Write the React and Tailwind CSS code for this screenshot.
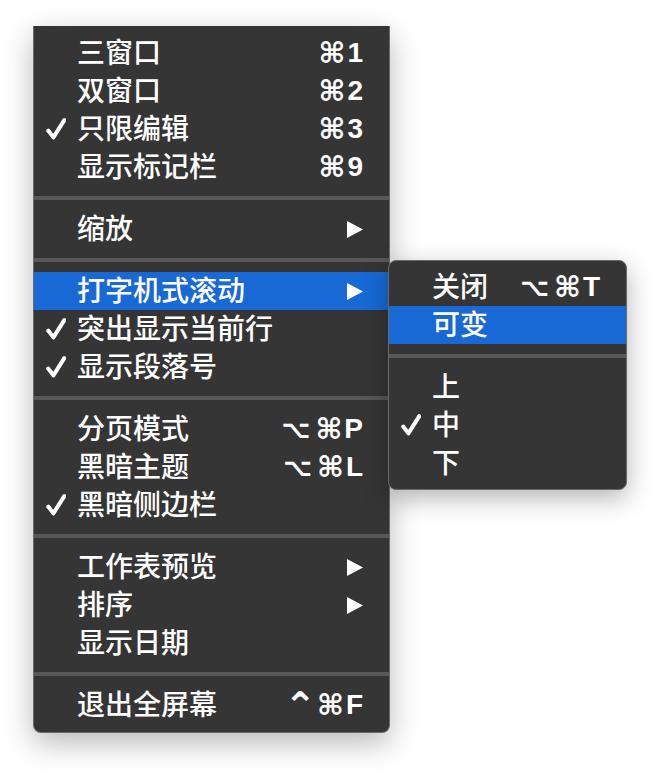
import React from "react";

const CJK = { fontFamily: '"Noto Sans CJK SC", sans-serif' };
const SYM = { fontFamily: '"DejaVu Sans", sans-serif' };
const KEY = { fontFamily: '"Liberation Sans", Arial, sans-serif' };

function Check() {
  return (
    <svg width="20" height="22" viewBox="0 0 20 22" className="block">
      <path d="M2.2 12.5 L7.4 19.3 L18.3 2.2" fill="none" stroke="white" strokeWidth="4" strokeLinecap="round" strokeLinejoin="round" />
    </svg>
  );
}

function Arrow() {
  return (
    <svg width="16" height="17" viewBox="0 0 16 17" className="block">
      <polygon points="0,0 16,8.5 0,17" fill="white" />
    </svg>
  );
}

function Mod({ m }) {
  if (m === "⌘") {
    return <span className="text-[29px] font-bold leading-none" style={SYM}>⌘</span>;
  }
  if (m === "⌥") {
    return <span className="mr-[5px] text-[25px] font-bold leading-none" style={SYM}>⌥</span>;
  }
  return <span className="mr-[1px] pt-[2px] text-[38px] font-bold leading-none" style={SYM}>⌃</span>;
}

function Shortcut({ mods, k }) {
  return (
    <div className="flex items-center text-white">
      {mods.map((m, i) => (
        <Mod key={i} m={m} />
      ))}
      <span className="ml-[2px] text-[28px] font-bold leading-none" style={KEY}>{k}</span>
    </div>
  );
}

function Row({ item }) {
  if (item === "sep") {
    return (
      <div className="flex h-[24px] items-center">
        <div className="h-[4px] w-full bg-[#585858]" />
      </div>
    );
  }
  return (
    <div className={`flex h-[38px] items-center pr-[26px] text-white ${item.hi ? "bg-[#1869d6]" : ""}`}>
      <div className="flex w-[43px] shrink-0 pl-[12px]">{item.check ? <Check /> : null}</div>
      <div className="pb-[4px] text-[28px] font-medium leading-[34px]" style={CJK}>{item.label}</div>
      <div className="ml-auto flex items-center">
        {item.arrow ? <Arrow /> : null}
        {item.k ? <Shortcut mods={item.mods} k={item.k} /> : null}
      </div>
    </div>
  );
}

const mainItems = [
  { label: "三窗口", mods: ["⌘"], k: "1" },
  { label: "双窗口", mods: ["⌘"], k: "2" },
  { label: "只限编辑", mods: ["⌘"], k: "3", check: true },
  { label: "显示标记栏", mods: ["⌘"], k: "9" },
  "sep",
  { label: "缩放", arrow: true },
  "sep",
  { label: "打字机式滚动", arrow: true, hi: true },
  { label: "突出显示当前行", check: true },
  { label: "显示段落号", check: true },
  "sep",
  { label: "分页模式", mods: ["⌥", "⌘"], k: "P" },
  { label: "黑暗主题", mods: ["⌥", "⌘"], k: "L" },
  { label: "黑暗侧边栏", check: true },
  "sep",
  { label: "工作表预览", arrow: true },
  { label: "排序", arrow: true },
  { label: "显示日期" },
  "sep",
  { label: "退出全屏幕", mods: ["⌃", "⌘"], k: "F" },
];

const subItems = [
  { label: "关闭", mods: ["⌥", "⌘"], k: "T" },
  { label: "可变", hi: true },
  "sep",
  { label: "上" },
  { label: "中", check: true },
  { label: "下" },
];

export default function App() {
  return (
    <div className="min-h-[774px] w-[656px] bg-white pl-[33px] pt-[26px]">
      <div className="relative w-[357px]">
        <div className="rounded-b-[8px] border-x border-b border-[#6a6a6a] bg-[#353535] py-[8px] shadow-[0_10px_30px_rgba(0,0,0,0.28)]">
          {mainItems.map((it, i) => (
            <Row key={i} item={it} />
          ))}
        </div>
        <div className="absolute left-[355px] top-[234px] w-[239px] rounded-[8px] border border-[#6a6a6a] bg-[#353535] py-[7px] shadow-[0_8px_26px_rgba(0,0,0,0.3)]">
          {subItems.map((it, i) => (
            <Row key={i} item={it} />
          ))}
        </div>
      </div>
    </div>
  );
}
